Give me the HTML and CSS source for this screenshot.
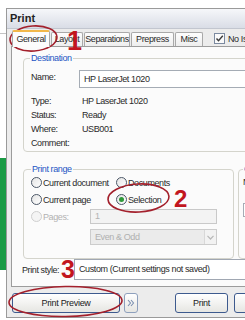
FILE: index.html
```html
<!DOCTYPE html>
<html lang="en">
<head>
    <meta charset="UTF-8">
    <meta name="viewport" content="width=device-width, initial-scale=1.0">
    <title>Print</title>
    <link rel="stylesheet" href="styles.css">
</head>
<body>
<div class="screen">
    <div class="backdrop">
        <div class="backdrop-line"></div>
        <div class="backdrop-green"></div>
    </div>
    <div class="dialog">
        <div class="titlebar">Print</div>
        <div class="tabs">
            <div class="tab active tab-general">General</div>
            <div class="tab tab-layout">Layout</div>
            <div class="tab tab-separations">Separations</div>
            <div class="tab tab-prepress">Prepress</div>
            <div class="tab tab-misc">Misc</div>
            <div class="tab-check">
                <span class="checkbox">
                    <svg width="9" height="9" viewBox="0 0 9 9"><path d="M1.5 4.5 L3.5 6.8 L7.8 1.8" fill="none" stroke="#3a3a3a" stroke-width="1.4"/></svg>
                </span>
                No Issues
            </div>
        </div>
        <div class="panel">
            <fieldset class="group destination">
                <legend>Destination</legend>
                <div class="dest-grid">
                    <span class="dest-label">Name:</span>
                    <div class="field name-field">HP LaserJet 1020</div>
                    <span class="dest-label first">Type:</span>
                    <span class="first">HP LaserJet 1020</span>
                    <span class="dest-label">Status:</span>
                    <span>Ready</span>
                    <span class="dest-label">Where:</span>
                    <span>USB001</span>
                    <span class="dest-label">Comment:</span>
                    <span></span>
                </div>
            </fieldset>
            <div class="group-row">
                <fieldset class="group range">
                    <legend>Print range</legend>
                    <div class="radio-row">
                        <label class="radio wide"><span class="dot"></span>Current document</label>
                        <label class="radio"><span class="dot"></span>Documents</label>
                    </div>
                    <div class="radio-row">
                        <label class="radio wide"><span class="dot"></span>Current page</label>
                        <label class="radio"><span class="dot checked"></span>Selection</label>
                    </div>
                    <div class="radio-row">
                        <label class="radio disabled pages"><span class="dot"></span>Pages:</label>
                        <div class="field off pages-field">1</div>
                    </div>
                    <div class="select off">
                        <span>Even &amp; Odd</span>
                        <span class="select-arrow">
                            <svg width="7" height="5" viewBox="0 0 7 5"><path d="M0.5 0.8 L3.5 4 L6.5 0.8" fill="none" stroke="#b8b8b8" stroke-width="1.2"/></svg>
                        </span>
                    </div>
                </fieldset>
                <fieldset class="group copies">
                    <legend>Copies</legend>
                    <div class="copies-text">Number of copies:</div>
                    <div class="field copies-field">1</div>
                </fieldset>
            </div>
            <div class="style-row">
                <span class="style-label">Print style:</span>
                <div class="field style-field">Custom (Current settings not saved)</div>
            </div>
        </div>
        <div class="buttons">
            <button class="btn preview">Print Preview</button>
            <button class="btn more">
                <svg width="8" height="8" viewBox="0 0 8 8"><path d="M1 1 L3.5 4 L1 7 M4 1 L6.5 4 L4 7" fill="none" stroke="#7a8fb0" stroke-width="1.1"/></svg>
            </button>
            <button class="btn print">Print</button>
            <button class="btn cancel">Cancel</button>
        </div>
    </div>
</div>
<div class="annotations">
    <svg class="rings" width="245" height="320" viewBox="0 0 245 320">
        <ellipse cx="33.5" cy="38.5" rx="23.5" ry="12.5" transform="rotate(-4 33.5 38.5)"/>
        <ellipse cx="138.5" cy="198" rx="30.5" ry="14" transform="rotate(-3 138.5 198)"/>
        <ellipse cx="65.5" cy="301.5" rx="56.5" ry="15" transform="rotate(-1 65.5 301.5)"/>
    </svg>
    <span class="num one">1</span>
    <span class="num two">2</span>
    <span class="num three">3</span>
</div>
</body>
</html>
```

FILE: styles.css
```css
body {
    margin: 0;
    width: 245px;
    height: 320px;
    overflow: hidden;
    position: relative;
    background-color: #ffffff;
    font-family: "Liberation Sans", Arial, sans-serif;
    font-size: 9px;
    letter-spacing: -0.4px;
    color: #2a2a2a;
}
.screen {
    display: flex;
    padding-top: 8px;
}
.backdrop {
    width: 6px;
    flex-shrink: 0;
}
.backdrop-line {
    height: 1px;
    margin-top: 25px;
    background-color: #c4c4c4;
}
.backdrop-green {
    height: 112px;
    margin-top: 124px;
    background-color: #1a9b45;
}
.dialog {
    width: 300px;
    height: 308px;
    flex-shrink: 0;
    border: 1px solid #9a9a9a;
    background-color: #ececec;
}
.titlebar {
    height: 19px;
    line-height: 19px;
    padding-left: 3px;
    font-size: 11px;
    font-weight: bold;
    letter-spacing: 0;
    color: #222;
    background: linear-gradient(#f6f7fa, #d9dde6);
    border-bottom: 1px solid #c2c6cf;
}
.tabs {
    display: flex;
    align-items: flex-end;
    height: 17px;
    padding-left: 5px;
    gap: 1px;
}
.tab {
    flex: none;
    box-sizing: border-box;
    height: 14px;
    line-height: 13px;
    text-align: center;
    background: linear-gradient(#fdfdfd, #eeeeee);
    border: 1px solid #a9a9a9;
    border-bottom: none;
    border-radius: 2px 2px 0 0;
    white-space: nowrap;
    overflow: hidden;
}
.tab.active {
    height: 17px;
    line-height: 15px;
    background: #fcfcfc;
    border-top: 2px solid #f2b84a;
    margin-bottom: -1px;
    position: relative;
    z-index: 1;
}
.tab-general {
    width: 38px;
}
.tab-layout {
    width: 32px;
}
.tab-separations {
    width: 46px;
}
.tab-prepress {
    width: 43px;
}
.tab-misc {
    width: 28px;
}
.tab-check {
    display: flex;
    align-items: center;
    gap: 3px;
    margin-left: 10px;
    height: 15px;
    white-space: nowrap;
}
.checkbox {
    width: 9px;
    height: 9px;
    border: 1px solid #7c8aa0;
    background: #fafafa;
    display: flex;
    align-items: center;
    justify-content: center;
}
.panel {
    margin-left: 4px;
    height: 241px;
    border: 1px solid #9c9c9c;
    background-color: #fbfbfb;
    padding: 6px 0 0 11px;
    box-sizing: border-box;
}
.group {
    margin: 0;
    border: 1px solid #d4d4cc;
    border-radius: 4px;
    padding: 0 6px 0 6px;
}
.group legend {
    padding: 0 1px;
    color: #2456c4;
}
.destination {
    height: 99px;
    box-sizing: border-box;
}
.dest-grid {
    display: grid;
    grid-template-columns: 52px 1fr;
    line-height: 14px;
    padding-top: 7px;
}
.dest-label {
    padding-left: 1px;
}
.first {
    padding-top: 6px;
}
.field {
    height: 18px;
    line-height: 18px;
    border: 1px solid #a5acb5;
    background: #ffffff;
    padding-left: 4px;
    box-sizing: border-box;
    white-space: nowrap;
}
.name-field {
    line-height: 16px;
    margin-left: -3px;
}
.group-row {
    display: flex;
    gap: 4px;
    margin-top: 12px;
}
.range {
    width: 211px;
    height: 95px;
    box-sizing: border-box;
    flex-shrink: 0;
    padding-left: 7px;
}
.radio-row {
    display: flex;
    align-items: center;
    height: 17px;
}
.radio {
    display: flex;
    align-items: center;
    gap: 1px;
    white-space: nowrap;
}
.radio.wide {
    width: 85px;
}
.radio.pages {
    width: 59px;
}
.radio.disabled {
    color: #b2b2b2;
}
.dot {
    width: 9px;
    height: 9px;
    border: 1px solid #4d5868;
    border-radius: 50%;
    background: linear-gradient(135deg, #e4e4e4, #ffffff);
    display: flex;
    align-items: center;
    justify-content: center;
}
.disabled .dot {
    border-color: #cfcfcf;
    background: #f4f4f4;
}
.dot.checked::after {
    content: "";
    width: 5px;
    height: 5px;
    border-radius: 50%;
    background: #2f9a3a;
}
.field.off {
    height: 15px;
    line-height: 13px;
    background: #f3f3f3;
    border-color: #c9c9c9;
    color: #b2b2b2;
}
.pages-field {
    width: 127px;
}
.select {
    display: flex;
    justify-content: space-between;
    align-items: center;
    width: 127px;
    height: 16px;
    margin: 4px 0 0 59px;
    padding-left: 4px;
    box-sizing: border-box;
    border: 1px solid #cccccc;
    background: #ebebeb;
    color: #b0b0b0;
}
.select-arrow {
    width: 11px;
    height: 14px;
    display: flex;
    align-items: center;
    justify-content: center;
    border-left: 1px solid #d8d8d8;
    background: #f2f2f2;
}
.copies {
    width: 60px;
    height: 95px;
    box-sizing: border-box;
    padding-left: 4px;
}
.copies-text {
    line-height: 17px;
    white-space: nowrap;
}
.copies-field {
    width: 40px;
    height: 14px;
    line-height: 12px;
    margin-top: 12px;
}
.style-row {
    display: flex;
    align-items: center;
    margin: 0 0 0 -1px;
}
.style-label {
    width: 52px;
    white-space: nowrap;
}
.style-field {
    flex: 1;
    height: 21px;
    line-height: 19px;
    border-color: #a0a7b2;
}
.buttons {
    display: flex;
    align-items: center;
    height: 30px;
    padding: 2px 0 0 5px;
    box-sizing: border-box;
}
.btn {
    height: 20px;
    padding: 0;
    font-family: inherit;
    font-size: 9px;
    letter-spacing: -0.3px;
    color: #222;
    border: 1px solid #3d5a8e;
    border-radius: 3px;
    background: linear-gradient(#ffffff, #e6e6e2);
    display: flex;
    align-items: center;
    justify-content: center;
}
.preview {
    width: 108px;
}
.more {
    width: 14px;
    margin-left: 4px;
    border-color: #8ea0bd;
}
.print {
    width: 53px;
    margin-left: 37px;
}
.cancel {
    width: 53px;
    margin-left: 6px;
}
.annotations {
    position: absolute;
    inset: 0;
    pointer-events: none;
}
.rings {
    position: absolute;
    left: 0;
    top: 0;
}
.rings ellipse {
    fill: none;
    stroke: #a3202c;
    stroke-width: 1.6;
}
.num {
    position: absolute;
    font-family: "Liberation Sans Narrow", "Liberation Sans", Arial, sans-serif;
    font-weight: bold;
    color: #c2161e;
    letter-spacing: 0;
    line-height: 1;
}
.one {
    left: 67px;
    top: 28px;
    font-size: 27px;
}
.two {
    left: 174px;
    top: 187px;
    font-size: 24px;
}
.three {
    left: 61px;
    top: 257px;
    font-size: 25px;
}
```
